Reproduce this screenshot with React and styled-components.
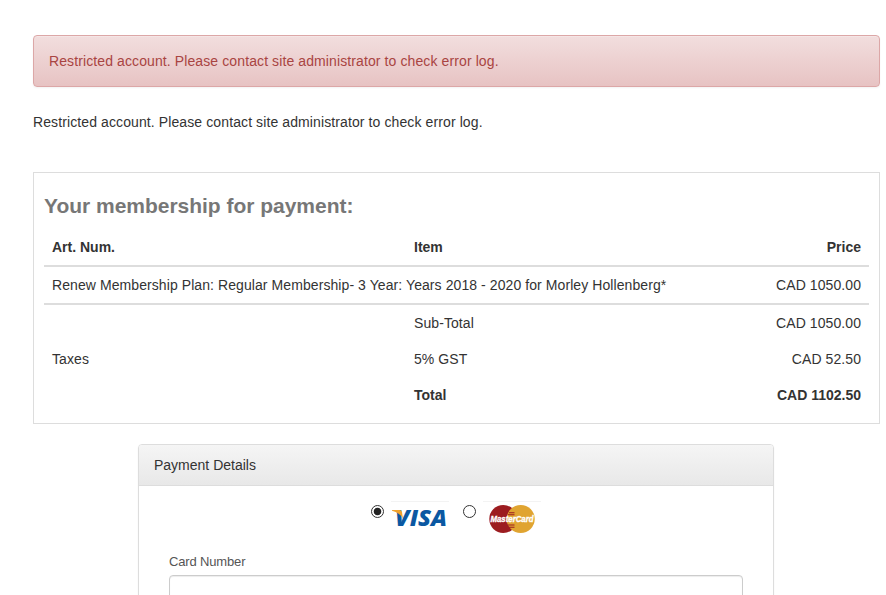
import React, { useState } from 'react';
import styled, { createGlobalStyle } from 'styled-components';

const GlobalStyle = createGlobalStyle`
  * {
    box-sizing: border-box;
  }
  body {
    margin: 0;
    overflow: hidden;
    background: #fff;
    color: #333;
    font-family: 'Liberation Sans', Arial, sans-serif;
    font-size: 14px;
    line-height: 20px;
  }
`;

const Page = styled.main`
  height: 595px;
  overflow: hidden;
  padding: 35px 6px 0 33px;
`;

const Alert = styled.div`
  padding: 15px;
  border: 1px solid #dca7a7;
  border-radius: 4px;
  background: linear-gradient(to bottom, #f2dede 0%, #e7c3c3 100%);
  box-shadow: inset 0 1px 0 rgba(255, 255, 255, 0.25),
    0 1px 2px rgba(0, 0, 0, 0.05);
  color: #a94442;
  letter-spacing: 0.105px;
`;

const Message = styled.p`
  margin: 25px 0 40px;
  letter-spacing: 0.105px;
`;

const OrderBox = styled.section`
  padding: 10px;
  border: 1px solid #ddd;
`;

const OrderTitle = styled.h2`
  margin: 0;
  height: 46px;
  line-height: 46px;
  font-size: 21px;
  letter-spacing: -0.02px;
  color: #777;
`;

const OrderTable = styled.table`
  width: 100%;
  table-layout: fixed;
  border-collapse: separate;
  border-spacing: 0;
  margin-bottom: 0;
`;

const Row = styled.tr`
  th,
  td {
    padding: 8px;
    font-weight: ${(props) => (props.$bold ? 'bold' : 'normal')};
    letter-spacing: ${(props) => (props.$bold ? '0' : '0.08px')};
    border-bottom: ${(props) => (props.$ruled ? '2px solid #ddd' : '0')};
  }
`;

const Cell = styled.td`
  text-align: ${(props) => (props.$right ? 'right' : 'left')};
`;

const Panel = styled.section`
  width: 636px;
  height: 400px;
  margin: 20px 0 0 105px;
  border: 1px solid #ddd;
  border-radius: 4px;
  box-shadow: 0 1px 2px rgba(0, 0, 0, 0.05);
`;

const PanelHeading = styled.div`
  padding: 10px 15px;
  border-bottom: 1px solid #ddd;
  border-radius: 3px 3px 0 0;
  background: linear-gradient(to bottom, #f5f5f5 0%, #e8e8e8 100%);
`;

const PanelBody = styled.div`
  padding: 15px 30px;
`;

const CardTypes = styled.div`
  display: flex;
  justify-content: center;
  height: 51px;
`;

const CardType = styled.label`
  display: flex;
  align-items: flex-start;
  margin-right: ${(props) => (props.$last ? '0' : '14px')};
`;

const Radio = styled.input`
  appearance: none;
  width: 13px;
  height: 13px;
  margin: 4px 7px 0 0;
  border: 1px solid #333;
  border-radius: 50%;
  background: #fff;

  &:checked {
    background: radial-gradient(circle, #222 0 3.4px, #fff 4.2px);
  }
`;

const FieldLabel = styled.label`
  display: block;
  height: 23px;
  font-size: 13px;
  letter-spacing: -0.15px;
  color: #555;
`;

const Field = styled.input`
  display: block;
  width: 100%;
  height: 34px;
  padding: 6px 12px;
  border: 1px solid #ccc;
  border-radius: 4px;
  box-shadow: inset 0 1px 1px rgba(0, 0, 0, 0.075);
  font: inherit;
`;

const CardLogo = styled.svg`
  display: block;
  width: 58px;
  height: 36px;
  overflow: visible;
  border-top: 1px solid #f3f3f3;
  font-family: 'Open Sans', 'Liberation Sans', sans-serif;
  font-style: italic;
`;

function VisaLogo() {
  return (
    <CardLogo viewBox="0 1 58 35" aria-label="Visa">
      <text
        x="4"
        y="25"
        fontSize="22.5"
        fontWeight="800"
        fill="#0b58a2"
        textLength="52"
        lengthAdjust="spacingAndGlyphs"
      >
        VISA
      </text>
      <path d="M1 9h7.6q2 0 2.4 2l.9 6.5Q8.8 11.8 1 9.8z" fill="#f0a22d" />
    </CardLogo>
  );
}

function MasterCardLogo() {
  return (
    <CardLogo viewBox="0 1 58 35" aria-label="MasterCard">
      <circle cx="20.3" cy="18" r="14" fill="#9c1c20" />
      <circle cx="37.7" cy="18" r="14" fill="#e0a431" />
      <path
        d="M26 11.7h5.5M25 13.8h6.5M25 24h6.5M26 26.2h5.5"
        stroke="#9c1c20"
        strokeWidth="1.1"
      />
      <text
        x="7.5"
        y="21"
        fontFamily="Liberation Sans"
        fontSize="9.5"
        fontWeight="bold"
        fill="#fff"
        stroke="#fff"
        strokeWidth="0.4"
        textLength="43"
        lengthAdjust="spacingAndGlyphs"
      >
        MasterCard
      </text>
    </CardLogo>
  );
}

const errorText =
  'Restricted account. Please contact site administrator to check error log.';

export default function App() {
  const [cardType, setCardType] = useState('visa');

  return (
    <>
      <GlobalStyle />
      <Page>
        <Alert role="alert">{errorText}</Alert>
        <Message>{errorText}</Message>

        <OrderBox>
          <OrderTitle>Your membership for payment:</OrderTitle>
          <OrderTable>
            <colgroup>
              <col width="362" />
              <col />
              <col width="140" />
            </colgroup>
            <thead>
              <Row $bold $ruled>
                <Cell as="th">Art. Num.</Cell>
                <Cell as="th">Item</Cell>
                <Cell as="th" $right>
                  Price
                </Cell>
              </Row>
            </thead>
            <tbody>
              <Row $ruled>
                <Cell colSpan={2}>
                  Renew Membership Plan: Regular Membership- 3 Year: Years 2018
                  - 2020 for Morley Hollenberg*
                </Cell>
                <Cell $right>CAD 1050.00</Cell>
              </Row>
              <Row>
                <Cell />
                <Cell>Sub-Total</Cell>
                <Cell $right>CAD 1050.00</Cell>
              </Row>
              <Row>
                <Cell>Taxes</Cell>
                <Cell>5% GST</Cell>
                <Cell $right>CAD 52.50</Cell>
              </Row>
              <Row $bold>
                <Cell />
                <Cell>Total</Cell>
                <Cell $right>CAD 1102.50</Cell>
              </Row>
            </tbody>
          </OrderTable>
        </OrderBox>

        <Panel>
          <PanelHeading>Payment Details</PanelHeading>
          <PanelBody>
            <CardTypes>
              <CardType>
                <Radio
                  type="radio"
                  name="cardType"
                  checked={cardType === 'visa'}
                  onChange={() => setCardType('visa')}
                />
                <VisaLogo />
              </CardType>
              <CardType $last>
                <Radio
                  type="radio"
                  name="cardType"
                  checked={cardType === 'mastercard'}
                  onChange={() => setCardType('mastercard')}
                />
                <MasterCardLogo />
              </CardType>
            </CardTypes>
            <FieldLabel htmlFor="cardNumber">Card Number</FieldLabel>
            <Field id="cardNumber" type="text" />
          </PanelBody>
        </Panel>
      </Page>
    </>
  );
}
